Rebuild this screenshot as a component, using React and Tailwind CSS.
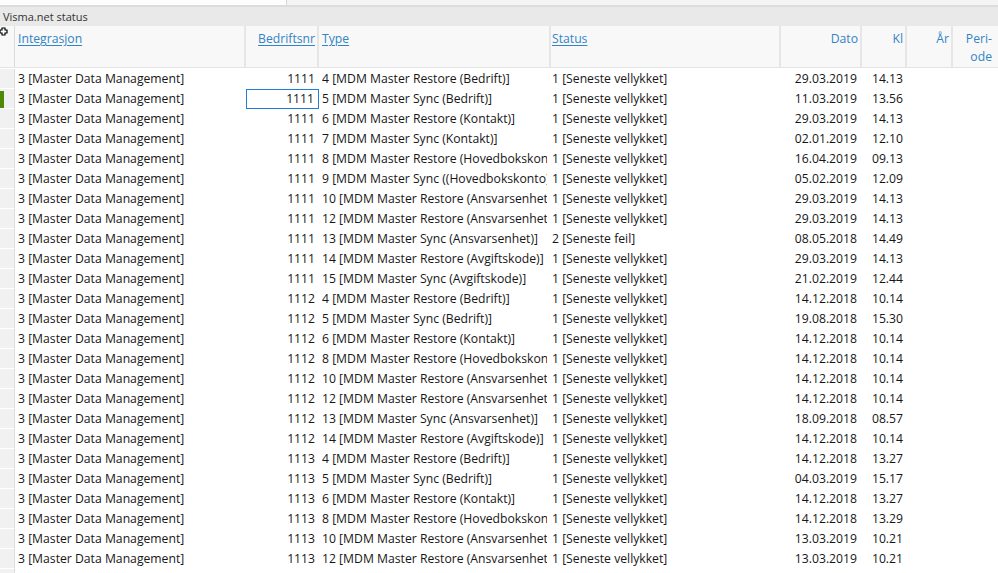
import React from "react";

const rows = [
  ["1111", "4 [MDM Master Restore (Bedrift)]", "1 [Seneste vellykket]", "29.03.2019", "14.13"],
  ["1111", "5 [MDM Master Sync (Bedrift)]", "1 [Seneste vellykket]", "11.03.2019", "13.56"],
  ["1111", "6 [MDM Master Restore (Kontakt)]", "1 [Seneste vellykket]", "29.03.2019", "14.13"],
  ["1111", "7 [MDM Master Sync (Kontakt)]", "1 [Seneste vellykket]", "02.01.2019", "12.10"],
  ["1111", "8 [MDM Master Restore (Hovedbokskonto)]", "1 [Seneste vellykket]", "16.04.2019", "09.13"],
  ["1111", "9 [MDM Master Sync ((Hovedbokskonto))]", "1 [Seneste vellykket]", "05.02.2019", "12.09"],
  ["1111", "10 [MDM Master Restore (Ansvarsenhet)]", "1 [Seneste vellykket]", "29.03.2019", "14.13"],
  ["1111", "12 [MDM Master Restore (Ansvarsenhet)]", "1 [Seneste vellykket]", "29.03.2019", "14.13"],
  ["1111", "13 [MDM Master Sync (Ansvarsenhet)]", "2 [Seneste feil]", "08.05.2018", "14.49"],
  ["1111", "14 [MDM Master Restore (Avgiftskode)]", "1 [Seneste vellykket]", "29.03.2019", "14.13"],
  ["1111", "15 [MDM Master Sync (Avgiftskode)]", "1 [Seneste vellykket]", "21.02.2019", "12.44"],
  ["1112", "4 [MDM Master Restore (Bedrift)]", "1 [Seneste vellykket]", "14.12.2018", "10.14"],
  ["1112", "5 [MDM Master Sync (Bedrift)]", "1 [Seneste vellykket]", "19.08.2018", "15.30"],
  ["1112", "6 [MDM Master Restore (Kontakt)]", "1 [Seneste vellykket]", "14.12.2018", "10.14"],
  ["1112", "8 [MDM Master Restore (Hovedbokskonto)]", "1 [Seneste vellykket]", "14.12.2018", "10.14"],
  ["1112", "10 [MDM Master Restore (Ansvarsenhet)]", "1 [Seneste vellykket]", "14.12.2018", "10.14"],
  ["1112", "12 [MDM Master Restore (Ansvarsenhet)]", "1 [Seneste vellykket]", "14.12.2018", "10.14"],
  ["1112", "13 [MDM Master Sync (Ansvarsenhet)]", "1 [Seneste vellykket]", "18.09.2018", "08.57"],
  ["1112", "14 [MDM Master Restore (Avgiftskode)]", "1 [Seneste vellykket]", "14.12.2018", "10.14"],
  ["1113", "4 [MDM Master Restore (Bedrift)]", "1 [Seneste vellykket]", "14.12.2018", "13.27"],
  ["1113", "5 [MDM Master Sync (Bedrift)]", "1 [Seneste vellykket]", "04.03.2019", "15.17"],
  ["1113", "6 [MDM Master Restore (Kontakt)]", "1 [Seneste vellykket]", "14.12.2018", "13.27"],
  ["1113", "8 [MDM Master Restore (Hovedbokskonto)]", "1 [Seneste vellykket]", "14.12.2018", "13.29"],
  ["1113", "10 [MDM Master Restore (Ansvarsenhet)]", "1 [Seneste vellykket]", "13.03.2019", "10.21"],
  ["1113", "12 [MDM Master Restore (Ansvarsenhet)]", "1 [Seneste vellykket]", "13.03.2019", "10.21"],
];

const cols = "grid grid-cols-[15px_231px_73px_232px_230px_81px_45px_46px_46px]";

function HeadCell({ children, right, link, last, pl = "pl-[3px]" }) {
  return (
    <div
      className={`h-[41px] pt-[4px] leading-[18px] ${right ? "text-right" : pl} ${
        last ? "pr-[7px]" : right ? "pr-[2px] border-r-2 border-[#e6e6e6]" : "border-r-2 border-[#e6e6e6]"
      } text-[#3184c6] ${link ? "underline underline-offset-2" : ""} overflow-hidden whitespace-nowrap`}
    >
      {children}
    </div>
  );
}

export default function App() {
  return (
    <div
      className="w-[998px] h-[573px] overflow-hidden bg-white text-[12.2px] text-[#161616]"
      style={{ fontFamily: '"Open Sans", "Noto Sans", sans-serif' }}
    >
      {/* top strip */}
      <div className="flex h-[7px] bg-[#f4f4f4] border-b-2 border-[#dcdcdc] overflow-hidden">
        <div className="w-[287px] bg-[#fdfdfd] border-r border-[#d6d6d6] pl-[3px]">
          <div className="-mt-[12px] leading-[16px] text-[#333]">Sluttdato</div>
        </div>
        <div className="flex-1 pl-[8px]">
          <div className="-mt-[12px] leading-[16px] text-[#999]">...</div>
        </div>
      </div>
      {/* title bar */}
      <div className="h-[19px] bg-[#e9e9e9] pl-[3px] leading-[19px] text-[11px] text-[#333]">Visma.net status</div>
      {/* header */}
      <div className={`${cols} bg-[#f8f8f8] border-b border-[#e4e4e4]`}>
        <div className="h-[41px] border-r border-[#dcdcdc] relative">
          <svg width="8" height="9" viewBox="0 0 8 9" className="absolute left-0 top-[1px]">
            <path d="M0 3 H2 V1 H5 V3 H7 V6 H5 V8 H2 V6 H0 Z" fill="#fff" stroke="#000" strokeWidth="1.2" />
          </svg>
        </div>
        <HeadCell link>Integrasjon</HeadCell>
        <HeadCell link right>Bedriftsnr</HeadCell>
        <HeadCell link>Type</HeadCell>
        <HeadCell link pl="pl-[1px]">Status</HeadCell>
        <HeadCell right>Dato</HeadCell>
        <HeadCell right>Kl</HeadCell>
        <HeadCell right>År</HeadCell>
        <HeadCell right last>
          <div>Peri-</div>
          <div>ode</div>
        </HeadCell>
      </div>
      {/* rows */}
      <div className="pt-[1px]">
        {rows.map((r, i) => (
          <div key={i} className={`${cols} h-[20px] leading-[20px]`}>
            <div className="bg-[#f1f1f1] border-r border-[#dcdcdc] border-b border-b-white relative">
              {i === 1 && <div className="absolute left-0 top-[2px] w-[4px] h-[17px] bg-[#4d8a06]" />}
            </div>
            <div className="pl-[3px] overflow-hidden whitespace-nowrap">3 [Master Data Management]</div>
            <div
              className={`text-right pr-[4px] overflow-hidden whitespace-nowrap ${
                i === 1 ? "border border-[#1f7fd8] leading-[18px] pr-[3px]" : ""
              }`}
            >
              {r[0]}
            </div>
            <div className="pl-[3px] pr-[4px]">
              <div className="overflow-hidden whitespace-nowrap">{r[1]}</div>
            </div>
            <div className="pl-[1px] overflow-hidden whitespace-nowrap">{r[2]}</div>
            <div className="text-right pr-[5px] overflow-hidden whitespace-nowrap">{r[3]}</div>
            <div className="text-right pr-[4px] overflow-hidden whitespace-nowrap">{r[4]}</div>
            <div />
            <div />
          </div>
        ))}
        <div className={`${cols} h-[20px]`}>
          <div className="bg-[#f1f1f1] border-r border-[#dcdcdc]" />
        </div>
      </div>
    </div>
  );
}
